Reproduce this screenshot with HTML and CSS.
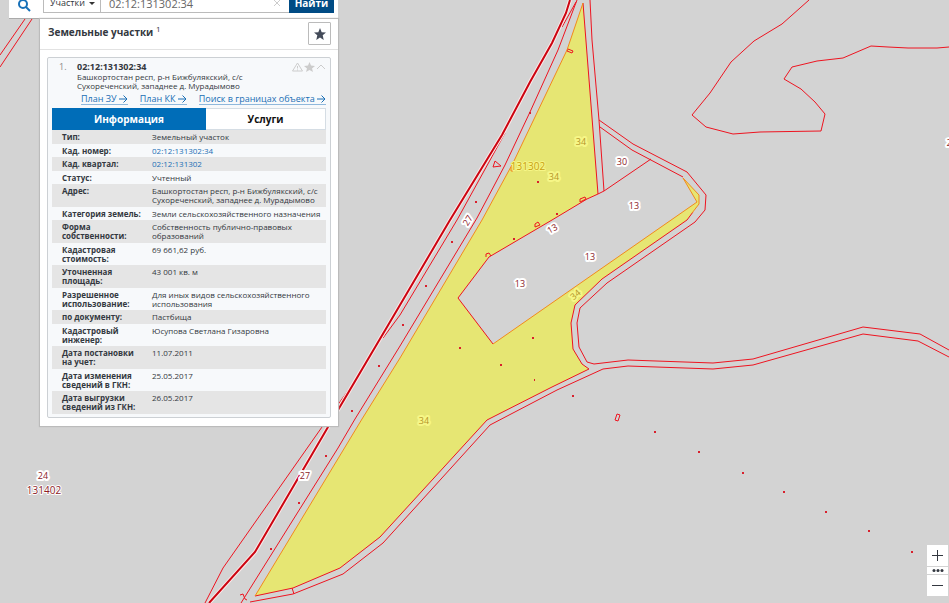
FILE: index.html
```html
<!DOCTYPE html>
<html lang="ru">
<head>
<meta charset="utf-8">
<title>Кадастровая карта</title>
<link rel="stylesheet" href="styles.css">
</head>
<body>
<svg class="map" viewBox="0 0 949 603" preserveAspectRatio="xMinYMin slice" role="img" aria-label="Карта участков">
  <path class="parcel" d="M583 3L598 194L587 199L552 220L489 257L458 298L493 344L697 202L683 178L699 195V204L693 212L687 220L602 279L575 305L571 323L573 349L582 364L589 369L552 387L487 420L380 537L340 568L293 588L255 596L362 419L400 358L482 220L513 163L567 50Z"/>
  <g class="edge">
    <path d="M32 19L0 67M25 19L0 55"/>
    <path d="M577 0L558 50L530 112L505 165L477 218L400 346L355 419L338 448L241 603"/>
    <path d="M576 2L562 27M505 133L457 220L400 315L383 338M357 378L322 427L223 568L205 603"/>
    <path d="M590 0L592 40L599 120L604 191L598 194M604 191L651 159"/>
    <path d="M600 127L632 150L683 177M693 212L687 220L602 279L575 305L571 323L573 349L582 364L589 369L552 387L487 420L380 537L340 568L293 588L255 596"/>
    <path d="M599 120L633 144L687 172L706 195L705 210L695 222L607 283L580 308L577 323L579 347L587 362L594 364L628 360L713 363L753 359L863 327L920 334L949 350"/>
    <path d="M949 357L918 341L863 334L753 365L713 369L628 366L603 369L557 390L490 425L383 543L343 574L293 594L250 602"/>
    <path d="M809 0L782 24L754 41L731 62L710 93L692 115L706 127L733 134L760 132L821 131L825 114L815 102L801 89L784 79L792 67L817 61L843 58L871 46L888 47L908 48L937 48L949 47"/>
    <path d="M583 3L598 194L587 199L552 220L489 257L458 298L493 344M292 588L294 594M240 595L243 594L245 599L247 600"/>
    <path d="M495 161L493 167L501 166ZM568 49L573 51L572 53L567 51ZM580 199L585 197L586 199L580 202ZM535 224L538 222L540 225L535 227ZM486 257V254L489 253L491 256M617 414L620 415L618 421L615 420Z"/>
  </g>
  <path class="edge-selected" d="M583 3L567 50L513 163L482 220L400 358L362 419L255 596M493 344L697 202L683 178L699 195V204L692 213M511 167V171H513V167"/>
  <path class="quarter-halo" d="M570 0L566 13L552 43L530 82L502 135L450 220L400 305L338 410L328 427L255 552L209 603"/>
  <path class="quarter" d="M570 0L566 13L552 43L530 82L502 135L450 220L400 305L338 410L328 427L255 552L209 603"/>
  <path class="marks" d="M529 113h2M475 202h2M451 242h2M425 286h2M402 325h2M378 366h2M351 411h2M325 456h2M298 503h2M270 549h2M537 182h2M556 214h2M513 239h2M459 348h2M532 338h2M500 365h2M534 380h1M572 396h2M654 432h2M698 452h2M742 473h2M783 492h2M825 512h2M868 531h2M911 552h2"/>
  <g class="labels">
    <text x="622" y="165">30</text><text x="634" y="209">13</text><text x="590" y="260">13</text><text x="520" y="287">13</text>
    <text x="552" y="232" transform="rotate(-28 552 228)">13</text>
    <text x="467" y="224" transform="rotate(-59 467 220)">27</text>
    <text x="305" y="479">27</text><text x="43" y="479">24</text><text x="949" y="146">2</text>
    <text class="quarter-name" x="44" y="494">131402</text>
    <g class="selected"><text x="581" y="145">34</text><text x="554" y="180">34</text><text x="424" y="424">34</text>
    <text x="575" y="298" transform="rotate(-40 575 294)">34</text>
    <text class="quarter-name" x="528" y="170">131302</text></g>
  </g>
</svg>

<main class="sidebar">
  <form class="search">
    <svg class="search-icon" viewBox="0 0 14 14" aria-hidden="true"><circle cx="6" cy="5" r="4"/><path d="M9 8L13 12"/></svg>
    <div class="search-box">
      <span class="kind"><select aria-label="Тип объекта"><option>Участки</option></select></span>
      <input class="query" type="text" aria-label="Кадастровый номер" value="02:12:131302:34">
      <button class="clear" type="button" aria-label="Очистить"><svg viewBox="0 0 8 8"><path d="M1 1L7 7M7 1L1 7"/></svg></button>
      <button class="find" type="submit">Найти</button>
    </div>
  </form>

  <section class="results">
    <header class="results-head">
      <h1>Земельные участки <sup>1</sup></h1>
      <button class="favorites" type="button" aria-label="Избранное"><svg viewBox="0 0 12 12"><path d="M6 0L7.700 4.200L12 4.500L8.700 7.300L9.700 12L6 9.400L2.300 12L3.300 7.300L0 4.500L4.300 4.200Z"/></svg></button>
    </header>
    <article class="card">
      <header class="card-head">
        <span class="index">1.</span>
        <div class="summary"><h2>02:12:131302:34</h2>
          <p>Башкортостан респ, р-н Бижбулякский, с/с<br>Сухореченский, западнее д. Мурадымово</p></div>
        <svg class="tools" viewBox="0 0 34 10" aria-hidden="true"><path class="line" d="M5.500 1L10.500 9H.500ZM5.500 4V6.500M5.500 7.500V8.500M25 7L29 3L33 7"/><path class="solid" d="M17.500 0L19 3.500L23 4L20 6.500L21 10L17.500 8L14 10L15 6.500L12 4L16 3.500Z"/></svg>
      </header>
      <nav class="links">
        <a href="#plan">План ЗУ <svg viewBox="0 0 9 8"><path d="M0 4H8M4.500 .5L8 4L4.500 7.500"/></svg></a>
        <a href="#kk">План КК <svg viewBox="0 0 9 8"><path d="M0 4H8M4.500 .5L8 4L4.500 7.500"/></svg></a>
        <a href="#search">Поиск в границах объекта <svg viewBox="0 0 9 8"><path d="M0 4H8M4.500 .5L8 4L4.500 7.500"/></svg></a>
      </nav>
      <div class="tabs"><button class="active" type="button">Информация</button><button type="button">Услуги</button></div>
      <table class="facts">
        <tr><th scope="row">Тип:</th><td>Земельный участок</td></tr>
        <tr><th scope="row">Кад. номер:</th><td><a href="#parcel">02:12:131302:34</a></td></tr>
        <tr><th scope="row">Кад. квартал:</th><td><a href="#quarter">02:12:131302</a></td></tr>
        <tr><th scope="row">Статус:</th><td>Учтенный</td></tr>
        <tr><th scope="row">Адрес:</th><td>Башкортостан респ, р-н Бижбулякский, с/с<br>Сухореченский, западнее д. Мурадымово</td></tr>
        <tr><th scope="row">Категория земель:</th><td>Земли сельскохозяйственного назначения</td></tr>
        <tr><th scope="row">Форма<br>собственности:</th><td>Собственность публично-правовых<br>образований</td></tr>
        <tr><th scope="row">Кадастровая<br>стоимость:</th><td>69 661,62 руб.</td></tr>
        <tr><th scope="row">Уточненная<br>площадь:</th><td>43 001 кв. м</td></tr>
        <tr><th scope="row">Разрешенное<br>использование:</th><td>Для иных видов сельскохозяйственного<br>использования</td></tr>
        <tr><th scope="row">по документу:</th><td>Пастбища</td></tr>
        <tr><th scope="row">Кадастровый<br>инженер:</th><td>Юсупова Светлана Гизаровна</td></tr>
        <tr><th scope="row">Дата постановки<br>на учет:</th><td>11.07.2011</td></tr>
        <tr><th scope="row">Дата изменения<br>сведений в ГКН:</th><td>25.05.2017</td></tr>
        <tr><th scope="row">Дата выгрузки<br>сведений из ГКН:</th><td>26.05.2017</td></tr>
      </table>
    </article>
  </section>
</main>

<div class="zoom">
  <button type="button" aria-label="Приблизить"><svg viewBox="0 0 21 21"><path d="M5 10.500H16M10.500 5V16"/></svg></button>
  <button class="more" type="button" aria-label="Масштаб"><svg viewBox="0 0 21 7"><circle cx="7" cy="3.500" r="1.500"/><circle cx="11" cy="3.500" r="1.500"/><circle cx="15" cy="3.500" r="1.500"/></svg></button>
  <button type="button" aria-label="Отдалить"><svg viewBox="0 0 21 21"><path d="M5 10.500H16"/></svg></button>
</div>
</body>
</html>
```
FILE: styles.css
```css
* { box-sizing: border-box; }
body {
  margin: 0;
  min-height: 100vh;
  overflow: hidden;
  background: #d3d3d3;
  color: #333840;
  font-family: "Open Sans", "Noto Sans", sans-serif;
  font-size: 8px;
  line-height: 9px;
}
h1, h2, p { margin: 0; }
button, input, select { margin: 0; padding: 0; border: 0; font: inherit; color: inherit; background: none; }
a { color: #1a6fb5; text-decoration: none; }

/* Map */
.map { position: absolute; inset: 0; width: 100%; height: 100%; z-index: -1; }
.parcel { fill: #e6e673; fill-rule: evenodd; }
.edge { fill: none; stroke: #ee1420; stroke-width: 1; }
.edge-selected { fill: none; stroke: #f28a1c; }
.quarter-halo { fill: none; stroke: #fbe9e9; stroke-width: 4; }
.quarter { fill: none; stroke: #cc0410; stroke-width: 2; }
.marks { fill: none; stroke: #d8202c; stroke-width: 2; }
.labels { font-size: 9px; text-anchor: middle; fill: #8c1c28; stroke: #fff; stroke-width: 4px; stroke-linejoin: round; paint-order: stroke; }
.labels .quarter-name { font-size: 10px; stroke-width: 2px; }
.labels .selected { fill: #b5962a; stroke: #f6f687; }
.labels .selected .quarter-name { fill: #c8a010; }

/* Search */
.sidebar { width: 329px; margin-left: 9px; }
.search {
  display: flex;
  align-items: flex-end;
  height: 19px;
  padding: 0 4px 5px 8px;
  overflow: hidden;
  background: #fff;
  border-bottom: 1px solid #aaa;
}
.search-icon { width: 14px; height: 14px; margin-right: 12px; fill: none; stroke: #1670b8; stroke-width: 2; flex: none; }
.search-box { display: flex; flex: 1; height: 20px; border: 1px solid #bbb; border-right: 0; }
.kind { display: flex; align-items: center; width: 57px; border-right: 1px solid #bbb; }
.kind::after { content: ""; border: 3px solid transparent; border-top-color: #333; border-bottom: 0; margin-left: 4px; }
.kind select { appearance: none; padding-left: 6px; font-size: 9px; line-height: 14px; }
.query { flex: 1; min-width: 0; padding-left: 8px; font-size: 11px; color: #666; }
.clear { width: 24px; }
.clear svg { width: 8px; height: 8px; display: block; margin: 0 auto; fill: none; stroke: #ccc; }
.find { width: 45px; margin: -1px 0; background: #004b84; color: #fff; font-size: 10px; font-weight: 700; }

/* Results */
.results { margin-left: 31px; padding-bottom: 8px; background: #fff; box-shadow: 0 0 1px 1px #bbb; }
.results-head { display: flex; align-items: flex-start; justify-content: space-between; height: 31px; padding: 3px 7px 0 8px; border-bottom: 1px solid #e2e2e2; }
.results h1 { font-size: 10px; line-height: 20px; }
.results sup { font-size: 8px; line-height: 0; font-weight: 400; }
.favorites { display: grid; place-items: center; width: 23px; height: 23px; border: 1px solid #bbb; border-radius: 1px; }
.favorites svg { width: 12px; height: 12px; fill: #444b59; }
.card { margin: 7px 7px 0 7px; padding: 4px 4px 3px; background: #f7f9fb; border: 1px solid #ccd0d4; border-radius: 2px; }
.card-head { display: flex; padding: 0 0 0 7px; }
.index { width: 18px; color: #888; font-size: 9px; }
.summary { flex: 1; white-space: nowrap; }
.summary h2 { font-size: 9px; line-height: 9px; margin-bottom: 1px; }
.tools { width: 34px; height: 10px; flex: none; }
.tools .line { fill: none; stroke: #ccc; stroke-width: 1; }
.tools .solid { fill: #ccc; }
.links { display: flex; justify-content: space-between; padding: 3px 0 3px 29px; font-size: 9px; line-height: 11px; white-space: nowrap; }
.links a { border-bottom: 1px solid #8fb8dc; }
.links svg { width: 9px; height: 8px; vertical-align: -1px; fill: none; stroke: #1a6fb5; }
.tabs { display: flex; height: 22px; background: #fff; border: 1px solid #d5dde4; }
.tabs button { flex: 1; font-size: 10px; font-weight: 700; color: #111; }
.tabs .active { flex: 0 0 154px; background: #006db8; color: #fff; margin: -1px 0 -1px -1px; }
.facts { width: 100%; border-collapse: collapse; text-align: left; white-space: nowrap; }
.facts th, .facts td { padding: 2px 0; vertical-align: top; }
.facts tr:nth-child(odd) { background: #e5e5e5; }
.facts tr:nth-child(odd) > * { padding-bottom: 3px; }
.facts th { width: 100px; padding-left: 10px; }

/* Zoom control */
.zoom { position: absolute; right: 1px; bottom: 7px; display: grid; gap: 1px; width: 21px; }
.zoom button { background: #fff; }
.zoom svg { display: block; width: 100%; fill: #333840; stroke: #333840; stroke-width: 1; }
.zoom .more svg { stroke: none; }
```
